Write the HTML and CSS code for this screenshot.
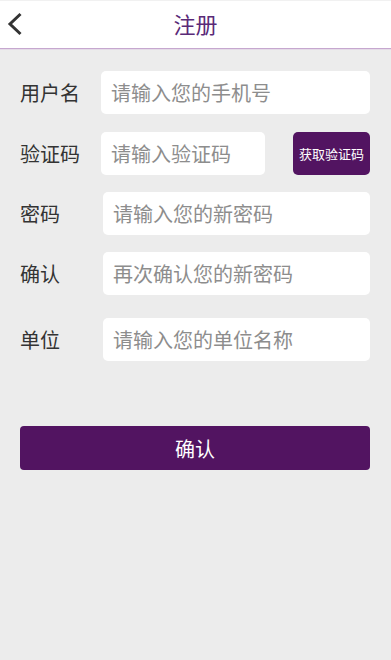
FILE: index.html
```html
<!DOCTYPE html>
<html lang="zh">
<head>
<meta charset="utf-8">
<title>注册</title>
<link rel="stylesheet" href="styles.css">
</head>
<body>
<header class="topbar">
  <button class="back" aria-label="返回">
    <svg width="16" height="24" viewBox="0 0 16 24"><polyline points="13.5,2 3,12 13.5,22" fill="none" stroke="#333" stroke-width="3"/></svg>
  </button>
  <h1 class="title">注册</h1>
</header>
<main class="form">
  <div class="row row-first">
    <label class="label">用户名</label>
    <input class="field" placeholder="请输入您的手机号">
  </div>
  <div class="row">
    <label class="label">验证码</label>
    <input class="field field-code" placeholder="请输入验证码">
    <button class="code-btn">获取验证码</button>
  </div>
  <div class="row row-close">
    <label class="label label-wide">密码</label>
    <input class="field" placeholder="请输入您的新密码">
  </div>
  <div class="row row-close">
    <label class="label label-wide">确认</label>
    <input class="field" placeholder="再次确认您的新密码">
  </div>
  <div class="row row-far">
    <label class="label label-wide">单位</label>
    <input class="field" placeholder="请输入您的单位名称">
  </div>
  <button class="submit">确认</button>
</main>
</body>
</html>
```
FILE: styles.css
```css
html, body {
  margin: 0;
  padding: 0;
  background: #ececec;
  font-family: "Noto Sans CJK SC", "Noto Sans", sans-serif;
  height: 100%;
}
.topbar {
  height: 49px;
  background: #fff;
  border-top: 1px solid #f1f1f1;
  border-bottom: 1px solid #c6a7cf;
  box-sizing: border-box;
  box-shadow: 0 1px 0 #e4dbe7;
  display: flex;
  align-items: center;
  justify-content: center;
  position: relative;
  padding-bottom: 3px;
}
.back {
  position: absolute;
  left: 7px;
  top: 10px;
  border: 0;
  background: none;
  padding: 0;
  width: 18px;
  height: 26px;
  display: flex;
  align-items: center;
}
.title {
  margin: 0;
  font-size: 22px;
  font-weight: normal;
  color: #5a2a78;
  line-height: 1;
}
.form {
  padding: 0 21px 0 20px;
  display: flex;
  flex-direction: column;
}
.row {
  display: flex;
  align-items: center;
  margin-top: 18px;
}
.row-first { margin-top: 22px; }
.row-close { margin-top: 17px; }
.row-far { margin-top: 23px; }
.label {
  width: 81px;
  flex: none;
  font-size: 20px;
  color: #333;
}
.label-wide { width: 83px; }
.field {
  flex: 1;
  min-width: 0;
  height: 43px;
  box-sizing: border-box;
  border: 0;
  border-radius: 5px;
  background: #fff;
  padding: 0 0 0 10px;
  font-family: inherit;
  font-size: 20px;
  color: #333;
  outline: none;
}
.field::placeholder { color: #8d8d8d; }
.field-code { flex: none; width: 164px; }
.code-btn {
  margin-left: auto;
  width: 77px;
  height: 43px;
  border: 0;
  border-radius: 5px;
  background: #521461;
  color: #fff;
  font-family: inherit;
  font-size: 13px;
  padding: 0;
}
.submit {
  margin-top: 65px;
  height: 44px;
  border: 0;
  border-radius: 4px;
  background: #521461;
  color: #fff;
  font-family: inherit;
  font-size: 20px;
  padding: 0;
}
```
